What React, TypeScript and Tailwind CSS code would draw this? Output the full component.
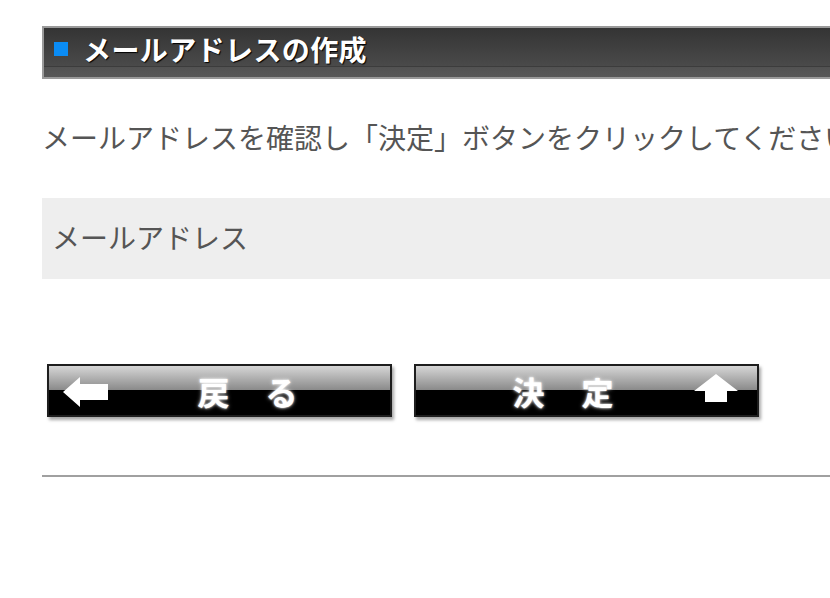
const jp = { fontFamily: '"Noto Sans CJK JP", "Noto Sans", sans-serif' };

function LeftArrow() {
  return (
    <svg width="48" height="36" viewBox="0 0 48 36" className="[filter:blur(0.6px)]">
      <polygon points="2,18 19,3 19,10 47,10 47,26 19,26 19,33" fill="#fff" />
    </svg>
  );
}

function UpArrow() {
  return (
    <svg width="48" height="32" viewBox="0 0 48 32" className="[filter:blur(0.6px)]">
      <polygon points="24,2 46,19 35,19 35,30 13,30 13,19 2,19" fill="#fff" />
    </svg>
  );
}

function ImageButton({ children }: { children: React.ReactNode }) {
  return (
    <button
      type="button"
      className="flex h-[53px] w-[345px] items-center border-2 border-[#1e1e1e] bg-[linear-gradient(to_bottom,#d6d6d6_0px,#8a8a8a_24px,#000_24px)] shadow-[2px_3px_3px_rgba(0,0,0,0.35)]"
    >
      {children}
    </button>
  );
}

function Glyph({ ch }: { ch: string }) {
  return (
    <span className="w-[33px] text-center text-[32px] font-bold leading-none text-white [text-shadow:0_0_2px_#fff,0_0_4px_rgba(255,255,255,0.7)]">
      {ch}
    </span>
  );
}

export default function App() {
  return (
    <div className="w-[830px] overflow-hidden bg-white" style={jp}>
      <div className="ml-[42px] w-[900px] pt-[26px] pb-[100px]">
        <div className="flex h-[53px] items-center border-2 border-[#9a9a9a] bg-[linear-gradient(to_bottom,#343434_0px,#4a4a4a_38px,#3c3c3c_38px,#3c3c3c_39px,#525252_39px,#585858_100%)] pb-[8px] pl-[10px]">
          <span className="h-[14px] w-[14px] bg-[#0a8cf5]" />
          <h1 className="ml-[15px] text-[28px] font-bold leading-none tracking-[0.4px] text-white [text-shadow:1px_1px_1px_#000]">
            メールアドレスの作成
          </h1>
        </div>

        <p className="mt-[38px] whitespace-nowrap text-[28px] leading-[40px] text-[#555]">
          メールアドレスを確認し「決定」ボタンをクリックしてください
        </p>

        <div className="mt-[41px] flex h-[81px] items-center bg-[#eeeeee] px-[10px] pb-[4px]">
          <span className="text-[28px] leading-none text-[#555]">メールアドレス</span>
        </div>

        <div className="ml-[5px] mt-[85px] flex gap-[22px]">
          <ImageButton>
            <span className="ml-[12px] mt-[2px]">
              <LeftArrow />
            </span>
            <span className="ml-[88px] flex gap-[35px]">
              <Glyph ch="戻" />
              <Glyph ch="る" />
            </span>
          </ImageButton>
          <ImageButton>
            <span className="ml-[96px] flex gap-[36px]">
              <Glyph ch="決" />
              <Glyph ch="定" />
            </span>
            <span className="ml-auto mr-[17px] mt-[-6px]">
              <UpArrow />
            </span>
          </ImageButton>
        </div>

        <div className="mt-[58px] h-[2px] bg-[#a0a0a0]" />
      </div>
    </div>
  );
}
